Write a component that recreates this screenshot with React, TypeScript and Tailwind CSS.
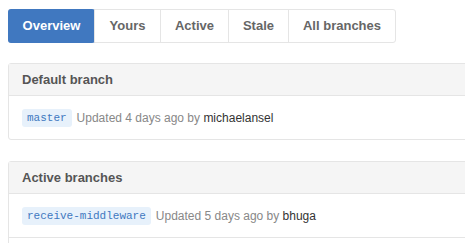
import React from 'react';

const tabs = [
  { label: 'Overview', w: 'w-[87px]' },
  { label: 'Yours', w: 'w-[66px]' },
  { label: 'Active', w: 'w-[68px]' },
  { label: 'Stale', w: 'w-[60px]' },
  { label: 'All branches', w: 'w-[107px]' },
];

const BranchRow: React.FC<{ name?: string; when?: string; author?: string }> = ({ name, when, author }) => (
  <div className="flex items-center h-[44px] px-[13px] border-t border-[#e5e5e5]">
    {name && (
      <>
        <span className="font-['Liberation_Mono',monospace] text-[11px] leading-[18px] px-[5px] rounded-[3px] bg-[#e7f1fb] text-[#4078c0]">
          {name}
        </span>
        <span className="ml-[5px] text-[12px] text-[#888]">
          Updated {when} by <span className="text-[#333]">{author}</span>
        </span>
      </>
    )}
  </div>
);

export default function App() {
  return (
    <div className="w-[465px] h-[243px] overflow-hidden bg-white font-['Liberation_Sans',Arial,sans-serif]">
      <div className="pt-[9px] pl-[8px]">
        {/* Tab nav */}
        <div className="flex w-fit h-[34px] border border-[#e5e5e5] rounded-[3px] text-[13px] font-bold">
          {tabs.map((t, i) => (
            <div
              key={t.label}
              className={
                i === 0
                  ? `flex items-center justify-center ${t.w} bg-[#4078c0] text-white rounded-[3px] -m-px h-[34px]`
                  : `flex items-center justify-center ${t.w} text-[#666] border-l border-[#e5e5e5]`
              }
            >
              {t.label}
            </div>
          ))}
        </div>

        {/* Default branch */}
        <div className="mt-[20px] w-[980px] border border-[#e5e5e5] rounded-[3px]">
          <div className="h-[31px] flex items-center px-[13px] bg-[#f5f5f5] text-[13px] font-bold text-[#555]">
            Default branch
          </div>
          <BranchRow name="master" when="4 days ago" author="michaelansel" />
        </div>

        {/* Active branches */}
        <div className="mt-[21px] w-[980px] border border-[#e5e5e5] rounded-[3px]">
          <div className="h-[31px] flex items-center px-[13px] bg-[#f5f5f5] text-[13px] font-bold text-[#555]">
            Active branches
          </div>
          <BranchRow name="receive-middleware" when="5 days ago" author="bhuga" />
          <BranchRow />
        </div>
      </div>
    </div>
  );
}
